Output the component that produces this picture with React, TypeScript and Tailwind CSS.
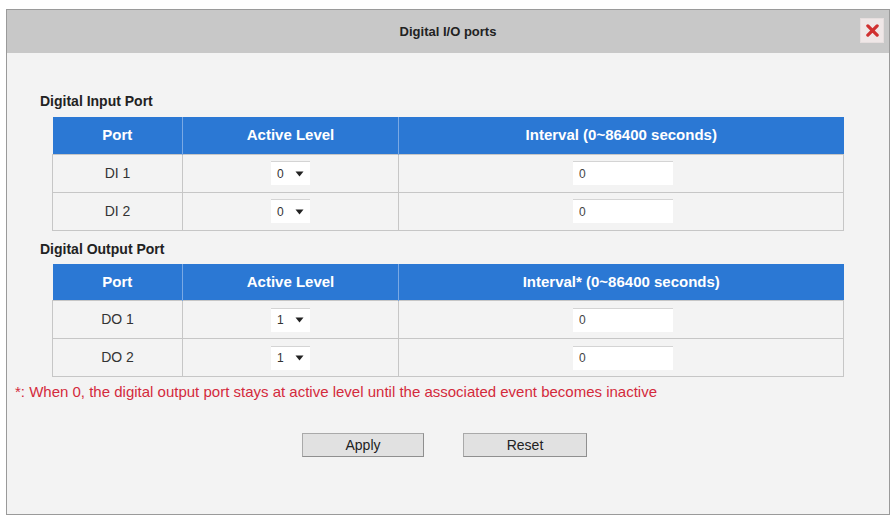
import React from "react";

interface PortRow {
  name: string;
  level: string;
  interval: string;
}

const inputPorts: PortRow[] = [
  { name: "DI 1", level: "0", interval: "0" },
  { name: "DI 2", level: "0", interval: "0" },
];

const outputPorts: PortRow[] = [
  { name: "DO 1", level: "1", interval: "0" },
  { name: "DO 2", level: "1", interval: "0" },
];

const LevelSelect = ({ value }: { value: string }) => (
  <div className="mx-auto flex h-[24px] w-[39px] items-center justify-between border-t border-t-[#d4d4d4] bg-white pl-[6px] pr-[6px] text-[12px] text-[#333]">
    <span>{value}</span>
    <svg width="9" height="6" viewBox="0 0 9 6">
      <path d="M0.5 0.5 L8.5 0.5 L4.5 5.5 Z" fill="#222" />
    </svg>
  </div>
);

const PortTable = ({ rows, intervalLabel }: { rows: PortRow[]; intervalLabel: string }) => (
  <table className="ml-[45px] w-[791px] table-fixed border-collapse">
    <colgroup>
      <col className="w-[130px]" />
      <col className="w-[216px]" />
      <col className="w-[445px]" />
    </colgroup>
    <thead>
      <tr className="h-[37px] bg-[#2b78d4] text-[15px] font-bold text-white">
        <th className="border-r border-r-[#7aa9e4] font-bold">Port</th>
        <th className="border-r border-r-[#7aa9e4] font-bold">Active Level</th>
        <th className="font-bold">{intervalLabel}</th>
      </tr>
    </thead>
    <tbody>
      {rows.map((row) => (
        <tr key={row.name} className="h-[38px] text-[14px] text-[#333]">
          <td className="border border-[#c6c6c6] text-center">{row.name}</td>
          <td className="border border-[#c6c6c6]">
            <LevelSelect value={row.level} />
          </td>
          <td className="border border-[#c6c6c6]">
            <input
              readOnly
              value={row.interval}
              className="ml-[174px] block h-[24px] w-[100px] border-t border-t-[#d4d4d4] bg-white pl-[6px] text-[12px] text-[#444] outline-none"
            />
          </td>
        </tr>
      ))}
    </tbody>
  </table>
);

export default function App() {
  return (
    <div
      className="h-[518px] w-[892px] bg-white pl-[6px] pt-[9px]"
      style={{ fontFamily: '"Liberation Sans", Arial, sans-serif' }}
    >
      <div className="flex h-[506px] w-[884px] flex-col border border-[#9a9a9a] bg-[#f3f3f3]">
        {/* title bar */}
        <div className="relative flex h-[43px] items-center justify-center bg-[#c8c8c8]">
          <span className="text-[13px] font-bold text-[#222]">Digital I/O ports</span>
          <button className="absolute right-[5px] top-[8px] flex h-[25px] w-[24px] items-center justify-center border border-[#e6dede] bg-[#efe7e7]">
            <svg width="13" height="13" viewBox="0 0 14 14">
              <path d="M2 2 L12 12 M12 2 L2 12" stroke="#d03030" strokeWidth="3.5" strokeLinecap="round" />
            </svg>
          </button>
        </div>

        <div className="flex flex-1 flex-col pt-[38px]">
          <div className="ml-[33px] h-[20px] text-[14px] font-bold leading-[20px] text-[#222]">Digital Input Port</div>
          <div className="mt-[6px]">
            <PortTable rows={inputPorts} intervalLabel="Interval (0~86400 seconds)" />
          </div>

          <div className="ml-[33px] mt-[8px] h-[20px] text-[14px] font-bold leading-[20px] text-[#222]">Digital Output Port</div>
          <div className="mt-[5px]">
            <PortTable rows={outputPorts} intervalLabel="Interval* (0~86400 seconds)" />
          </div>

          <div className="ml-[8px] mt-[5px] h-[20px] text-[15px] leading-[20px] text-[#d42a3c]">
            *: When 0, the digital output port stays at active level until the associated event becomes inactive
          </div>

          <div className="mt-[31px] flex justify-center gap-[39px] pr-[7px]">
            <button className="h-[24px] w-[122px] border border-[#a9a9a9] border-b-[#8f8f8f] border-r-[#8f8f8f] bg-[#e1e1e1] text-[14px] text-[#222]">
              Apply
            </button>
            <button className="h-[24px] w-[124px] border border-[#a9a9a9] border-b-[#8f8f8f] border-r-[#8f8f8f] bg-[#e1e1e1] text-[14px] text-[#222]">
              Reset
            </button>
          </div>
        </div>
      </div>
    </div>
  );
}
